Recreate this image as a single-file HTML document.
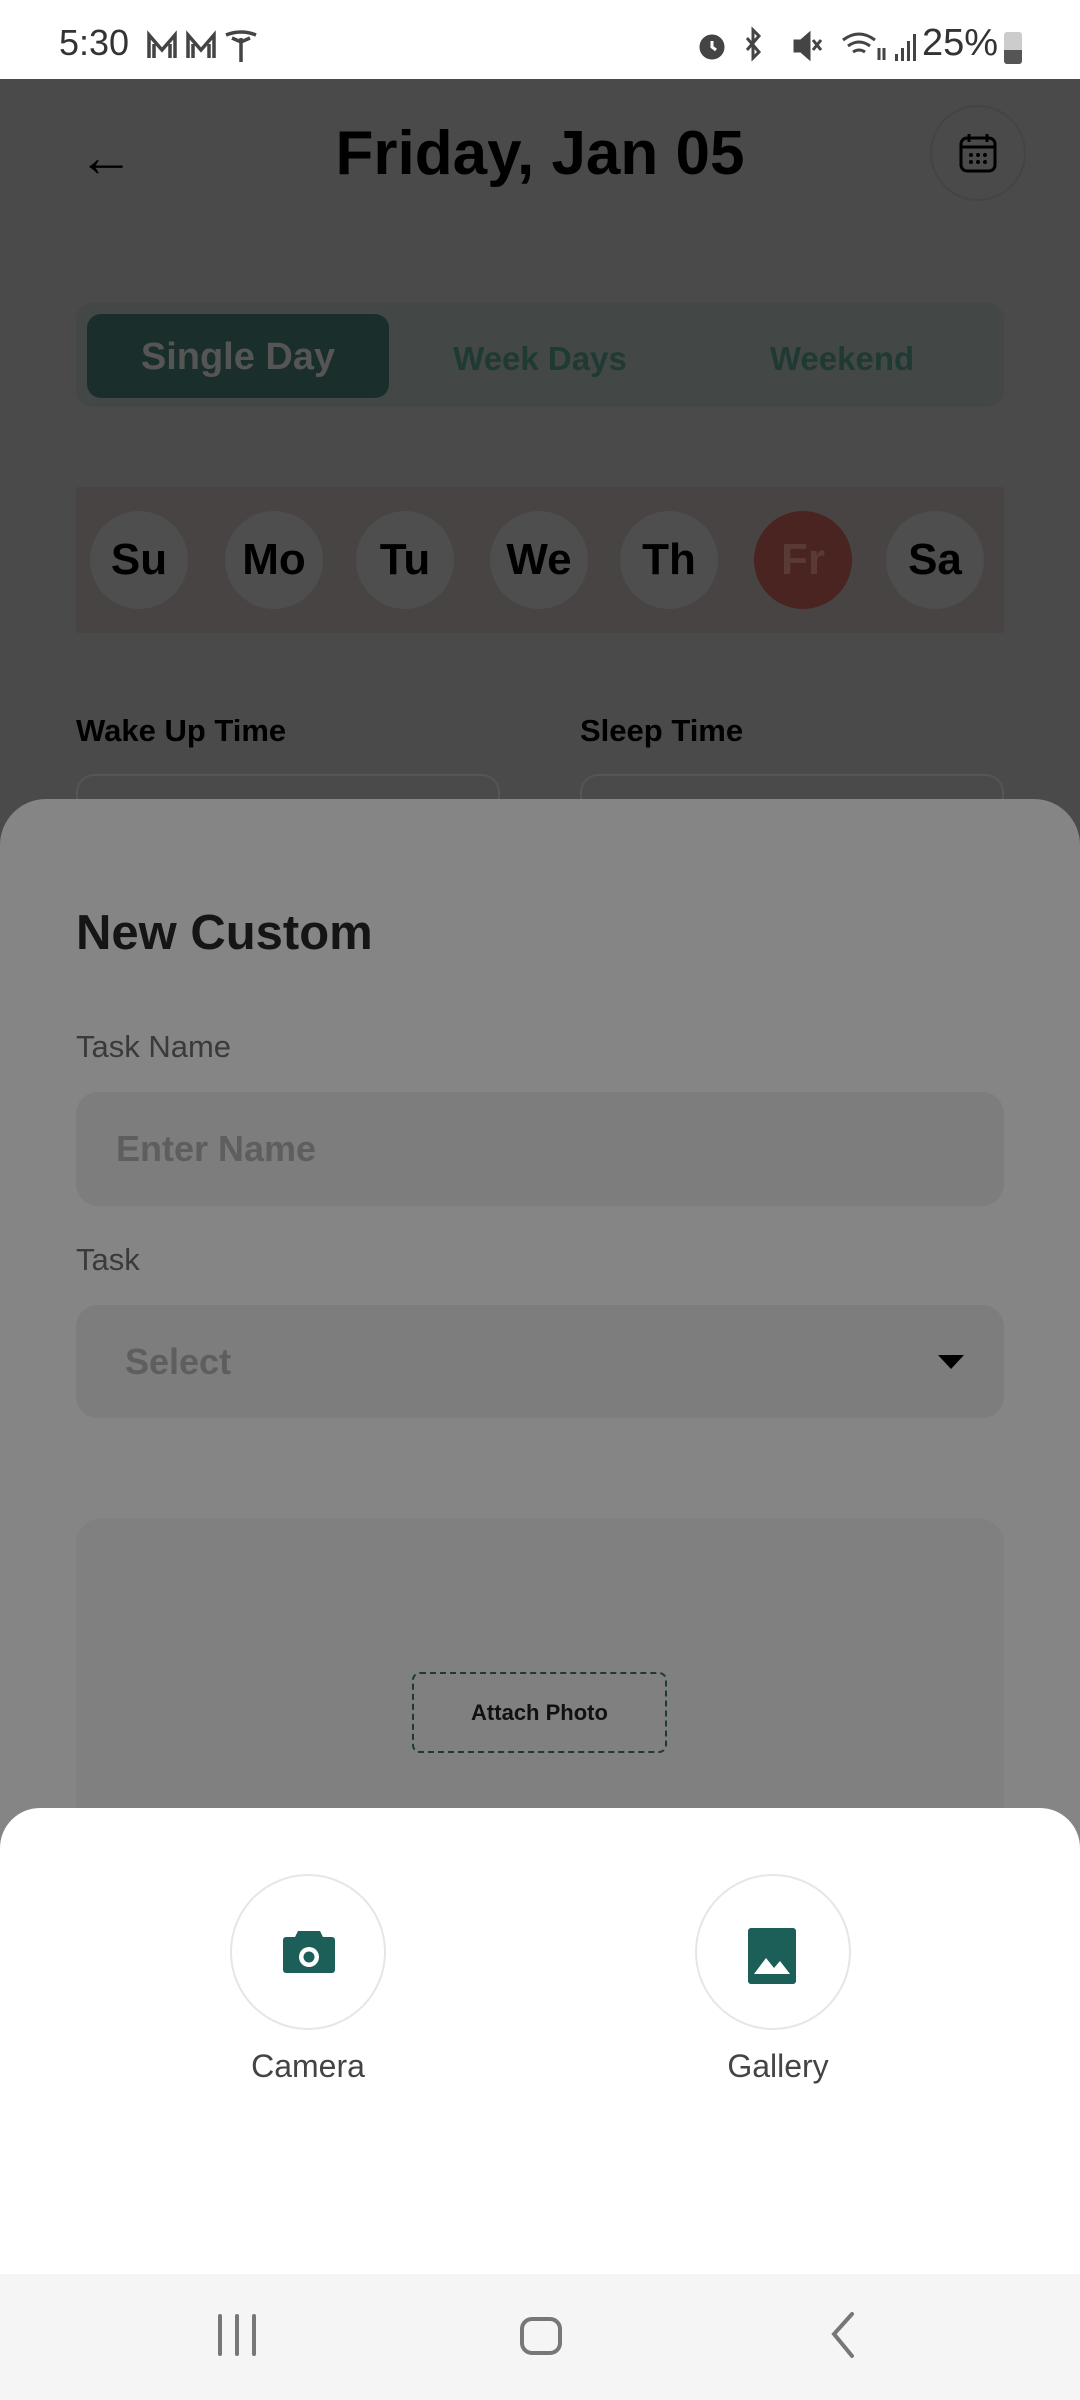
<!DOCTYPE html>
<html><head><meta charset="utf-8"><style>
*{margin:0;padding:0;box-sizing:border-box}
body{width:1080px;height:2400px;position:relative;overflow:hidden;background:#4a4a4a;font-family:"Liberation Sans",sans-serif}
.a{position:absolute}
.status{left:0;top:0;width:1080px;height:79px;background:#fff;color:#333;font-size:36px}
.t{white-space:nowrap}
.day{width:98px;height:98px;border-radius:50%;background:#4e4e4e;top:511px;display:flex;align-items:center;justify-content:center;font-size:44px;font-weight:bold;color:#000}
</style></head><body>
<div class="a status">
 <div class="a t" style="left:59px;top:22px;font-size:36px;color:#333">5:30</div>
 <svg class="a" style="left:146px;top:30px" width="130" height="32" viewBox="0 0 130 32" fill="none" stroke="#444" stroke-width="3.5"><path d="M3 28V5l13 15L29 5v23M8 28V14M24 28V14"/><path d="M42 28V5l13 15L68 5v23M47 28V14M63 28V14"/><path d="M80 5q15-6 30 0M95 8v24M86 8l9 4 9-4"/></svg>
 <svg class="a" style="left:695px;top:26px" width="310" height="40" viewBox="0 0 310 40" fill="none" stroke="#444" stroke-width="3">
  <circle cx="17" cy="21" r="11" fill="#444"/><path d="M6 8l5-4M28 8l-5-4M17 15v6l4 3" stroke="#fff"/>
  <path d="M52 12l12 14-6 6V4l6 6-12 14"/>
  <path d="M100 15h6l8-7v24l-8-7h-6z" fill="#444"/><path d="M118 14l8 10M126 14l-8 10"/>
  <path d="M148 14q16-12 32 0M153 20q11-8 22 0M158 26q6-4 12 0"/><path d="M184 22v12M189 22v12"/>
  <g fill="#444" stroke="none"><rect x="200" y="28" width="3" height="7"/><rect x="206" y="22" width="3" height="13"/><rect x="212" y="15" width="3" height="20"/><rect x="218" y="8" width="3" height="27"/></g>
 </svg>
 <div class="a t" style="left:922px;top:22px;font-size:38px;color:#333">25%</div>
 <div class="a" style="left:1004px;top:32px;width:18px;height:32px;border-radius:3px;background:#ccc"><div style="position:absolute;bottom:0;width:18px;height:14px;background:#555;border-radius:0 0 3px 3px"></div></div>
</div>
<div class="a t" style="left:78px;top:124px;font-size:56px;color:#000">←</div>
<div class="a t" style="left:0;width:1080px;text-align:center;top:118px;font-size:62px;font-weight:bold;color:#000">Friday, Jan 05</div>
<div class="a" style="left:930px;top:105px;width:96px;height:96px;border-radius:50%;border:2px solid #444"></div>
<svg class="a" style="left:958px;top:132px" width="40" height="42" viewBox="0 0 40 42" fill="none" stroke="#000" stroke-width="3"><rect x="3" y="6" width="34" height="33" rx="6"/><path d="M11 2v8M29 2v8M3 15h34"/><g fill="#000" stroke="none"><circle cx="13" cy="23" r="2"/><circle cx="20" cy="23" r="2"/><circle cx="27" cy="23" r="2"/><circle cx="13" cy="30" r="2"/><circle cx="20" cy="30" r="2"/><circle cx="27" cy="30" r="2"/></g></svg>
<div class="a" style="left:76px;top:303px;width:928px;height:104px;border-radius:16px;background:#434745"></div>
<div class="a" style="left:87px;top:314px;width:302px;height:84px;border-radius:14px;background:#1a2f2b"></div>
<div class="a t" style="left:87px;width:302px;text-align:center;top:336px;font-size:38px;font-weight:bold;color:#555">Single Day</div>
<div class="a t" style="left:400px;width:280px;text-align:center;top:340px;font-size:33px;font-weight:bold;color:#1e3a33">Week Days</div>
<div class="a t" style="left:702px;width:280px;text-align:center;top:340px;font-size:33px;font-weight:bold;color:#1e3a33">Weekend</div>
<div class="a" style="left:76px;top:487px;width:928px;height:146px;background:#484443"></div>
<div class="a day" style="left:90px">Su</div>
<div class="a day" style="left:225px">Mo</div>
<div class="a day" style="left:356px">Tu</div>
<div class="a day" style="left:490px">We</div>
<div class="a day" style="left:620px">Th</div>
<div class="a day" style="left:754px;background:#4a2420;color:#5a3a36">Fr</div>
<div class="a day" style="left:886px">Sa</div>
<div class="a t" style="left:76px;top:713px;font-size:31px;font-weight:bold;color:#000">Wake Up Time</div>
<div class="a t" style="left:580px;top:713px;font-size:31px;font-weight:bold;color:#000">Sleep Time</div>
<div class="a" style="left:76px;top:774px;width:424px;height:80px;border:2px solid #555;border-radius:18px"></div>
<div class="a" style="left:580px;top:774px;width:424px;height:80px;border:2px solid #555;border-radius:18px"></div>
<div class="a" style="left:0;top:799px;width:1080px;height:1100px;background:#858585;border-radius:46px 46px 0 0"></div>
<div class="a t" style="left:76px;top:905px;font-size:49px;font-weight:bold;color:#151515">New Custom</div>
<div class="a t" style="left:76px;top:1029px;font-size:31px;color:#3a3a3a">Task Name</div>
<div class="a" style="left:76px;top:1092px;width:928px;height:114px;border-radius:22px;background:#7d7d7d"></div>
<div class="a t" style="left:116px;top:1128px;font-size:36px;font-weight:bold;color:#5e5e5e">Enter Name</div>
<div class="a t" style="left:76px;top:1242px;font-size:31px;color:#3a3a3a">Task</div>
<div class="a" style="left:76px;top:1305px;width:928px;height:113px;border-radius:22px;background:#7d7d7d"></div>
<div class="a t" style="left:125px;top:1341px;font-size:36px;font-weight:bold;color:#5e5e5e">Select</div>
<div class="a" style="left:938px;top:1355px;width:0;height:0;border-left:13px solid transparent;border-right:13px solid transparent;border-top:14px solid #000"></div>
<div class="a" style="left:76px;top:1518px;width:928px;height:400px;border-radius:26px;background:#808080"></div>
<div class="a" style="left:412px;top:1672px;width:255px;height:81px;border:2px dashed #1e3a33;border-radius:8px;display:flex;align-items:center;justify-content:center;font-size:22px;font-weight:bold;color:#111">Attach Photo</div>
<div class="a" style="left:0;top:1808px;width:1080px;height:470px;background:#fff;border-radius:40px 40px 0 0"></div>
<div class="a" style="left:230px;top:1874px;width:156px;height:156px;border-radius:50%;border:2px solid #e6e6e6"></div>
<div class="a" style="left:695px;top:1874px;width:156px;height:156px;border-radius:50%;border:2px solid #e6e6e6"></div>
<svg class="a" style="left:282px;top:1927px" width="54" height="48" viewBox="0 0 54 48"><path d="M16 4h22l3 6h9a3 3 0 013 3v30a3 3 0 01-3 3H4a3 3 0 01-3-3V13a3 3 0 013-3h9z" fill="#1b5f58"/><circle cx="27" cy="30" r="10" fill="#fff"/><circle cx="27" cy="30" r="5.5" fill="#1b5f58"/></svg>
<svg class="a" style="left:748px;top:1928px" width="48" height="56" viewBox="0 0 48 56"><rect x="0" y="0" width="48" height="56" rx="3" fill="#1b5f58"/><path d="M6 46l12-16 8 10 6-7 10 13z" fill="#fff"/></svg>
<div class="a t" style="left:230px;width:156px;text-align:center;top:2048px;font-size:32px;color:#444">Camera</div>
<div class="a t" style="left:700px;width:156px;text-align:center;top:2048px;font-size:32px;color:#444">Gallery</div>
<div class="a" style="left:0;top:2274px;width:1080px;height:126px;background:#f5f5f5"></div>
<svg class="a" style="left:210px;top:2310px" width="660" height="50" viewBox="0 0 660 50" fill="none" stroke="#777" stroke-width="4" stroke-linecap="round"><path d="M10 6v38M27 6v38M44 6v38"/><rect x="312" y="9" width="38" height="34" rx="10"/><path d="M642 4l-18 20 18 22"/></svg>
</body></html>
